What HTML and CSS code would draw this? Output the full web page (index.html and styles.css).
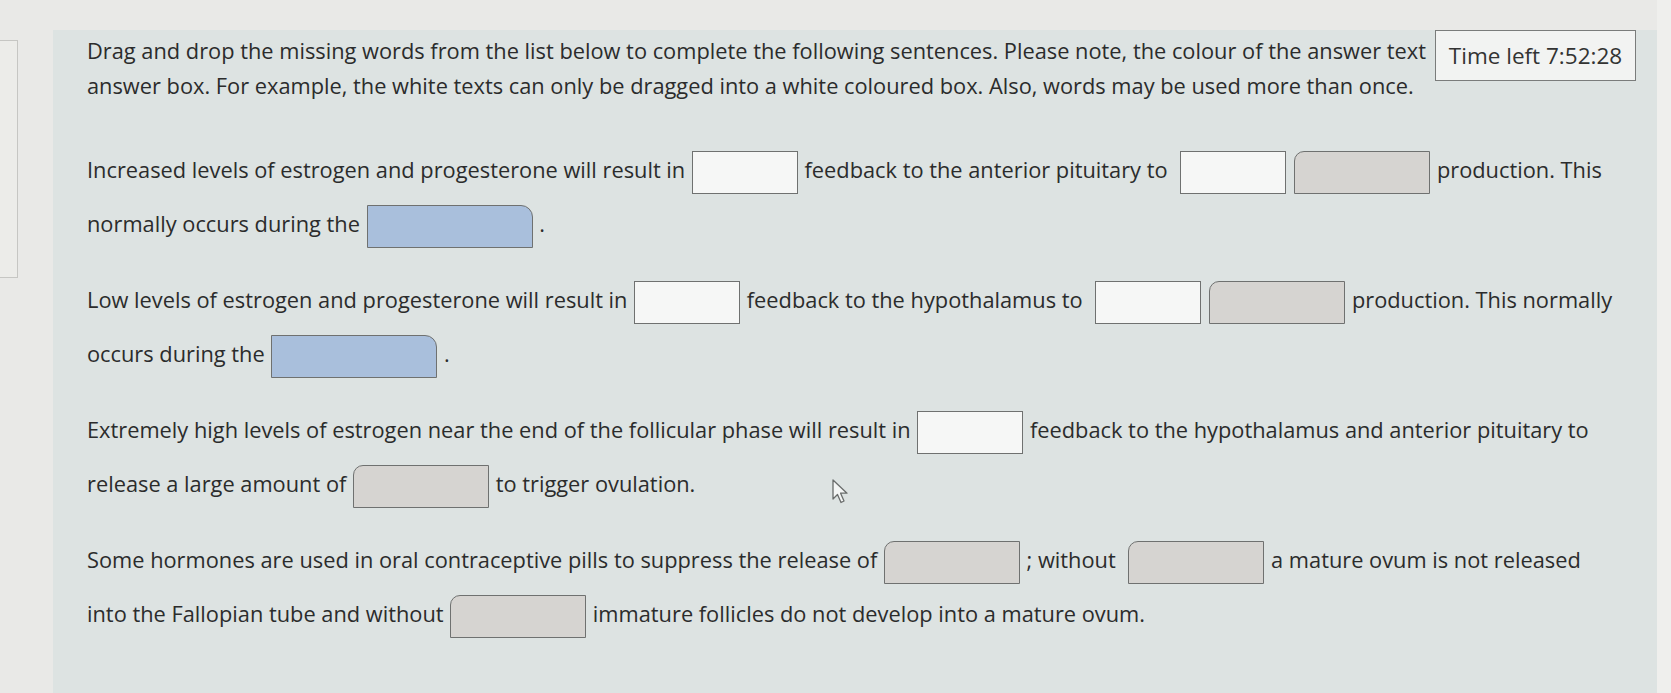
FILE: index.html
```html
<!DOCTYPE html>
<html lang="en">
<head>
<meta charset="utf-8">
<title>Drag and drop into text</title>
<link rel="stylesheet" href="styles.css">
</head>
<body>
<div class="page">
  <div class="side-tab"></div>
  <main class="panel">
    <div class="timer">Time left 7:52:28</div>
    <p class="intro">Drag and drop the missing words from the list below to complete the following sentences. Please note, the colour of the answer text<br>answer box. For example, the white texts can only be dragged into a white coloured box. Also, words may be used more than once.</p>

    <p class="q">Increased levels of estrogen and progesterone will result in <span class="drop g1"></span> feedback to the anterior pituitary to <span class="drop g1"></span><span class="drop g2"></span> production. This<br>normally occurs during the <span class="drop g3"></span> .</p>

    <p class="q">Low levels of estrogen and progesterone will result in <span class="drop g1"></span> feedback to the hypothalamus to <span class="drop g1"></span><span class="drop g2"></span> production. This normally<br>occurs during the <span class="drop g3"></span> .</p>

    <p class="q">Extremely high levels of estrogen near the end of the follicular phase will result in <span class="drop g1"></span> feedback to the hypothalamus and anterior pituitary to<br>release a large amount of <span class="drop g2"></span> to trigger ovulation.</p>

    <p class="q">Some hormones are used in oral contraceptive pills to suppress the release of <span class="drop g2"></span> ; without <span class="drop g2"></span> a mature ovum is not released<br>into the Fallopian tube and without <span class="drop g2"></span> immature follicles do not develop into a mature ovum.</p>

    <svg class="cursor" width="20" height="28" viewBox="0 0 20 28" aria-hidden="true">
      <path d="M2 2 L2 21 L6.5 16.5 L10 24.5 L13 23 L9.6 15.2 L16 15.2 Z" fill="#f4f6f5" stroke="#6a6d6c" stroke-width="1.3" stroke-linejoin="round"/>
    </svg>
  </main>
  <div class="edge"></div>
</div>
</body>
</html>
```

FILE: styles.css
```css
html, body {
  margin: 0;
  padding: 0;
}

body {
  background: #e9e9e7;
  font-family: "Open Sans", "DejaVu Sans", sans-serif;
  color: #2b2c2c;
  overflow: hidden;
}

.page {
  display: flex;
  align-items: flex-start;
  height: 693px;
}

.side-tab {
  width: 17px;
  height: 236px;
  margin-top: 40px;
  background: #ecece9;
  border: 1px solid #c6c6c3;
  border-left: none;
  flex: none;
}

.panel {
  position: relative;
  flex: none;
  width: 1570px;
  height: 663px;
  margin: 30px 0 0 35px;
  padding: 0 0 0 34px;
  background: #dde3e2;
  font-size: 21.8px;
}

.edge {
  flex: 1;
  height: 693px;
  background: #efefed;
}

.timer {
  float: right;
  margin: 0 21px 0 0;
  width: 201px;
  height: 51px;
  box-sizing: border-box;
  display: flex;
  align-items: center;
  justify-content: center;
  background: #f2f3f2;
  border: 1px solid #7a7c7b;
  font-size: 22.5px;
  color: #333;
}

.intro {
  margin: 0;
  padding-top: 3px;
  line-height: 35px;
  white-space: nowrap;
}

.q {
  margin: 0;
  line-height: 54px;
  white-space: nowrap;
}

.intro + .q {
  margin-top: 40px;
}

.q + .q {
  margin-top: 22px;
}

.drop {
  display: inline-block;
  vertical-align: middle;
  box-sizing: border-box;
  height: 43px;
  border: 1px solid #6f7170;
  margin: 0 1px;
}

.drop + .drop {
  margin-left: 7px;
}

.g1 {
  width: 106px;
  background: #f6f7f6;
}

.g2 {
  width: 136px;
  background: #d6d4d1;
  border-radius: 10px 0 0 0;
}

.g3 {
  width: 166px;
  background: #a9bfdc;
  border-radius: 0 12px 0 0;
}

.cursor {
  position: absolute;
  left: 778px;
  top: 448px;
}
```
